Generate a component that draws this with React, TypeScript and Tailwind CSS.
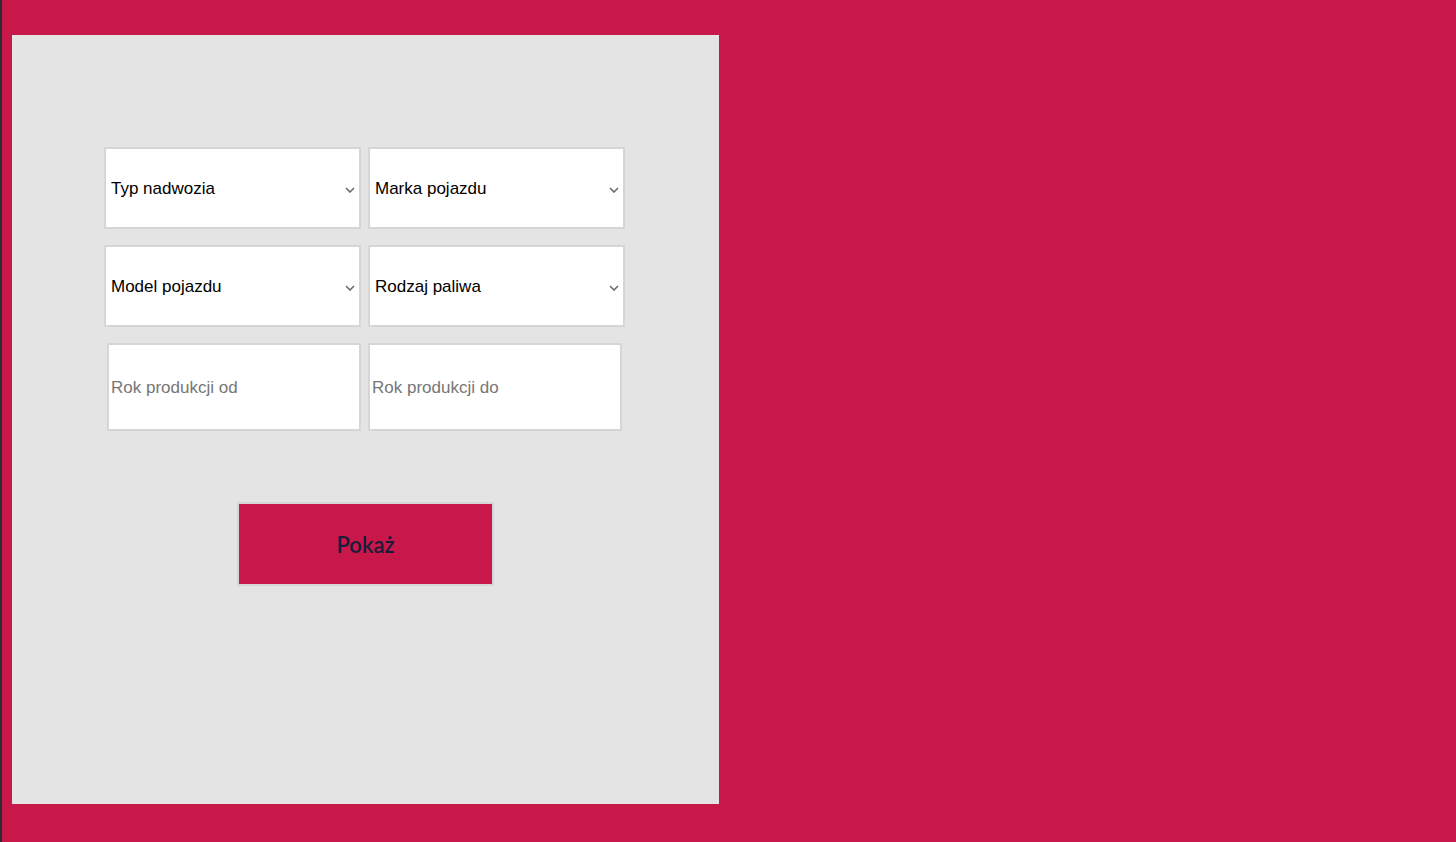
import { useState } from "react";

function Chevron() {
  return (
    <svg width="10" height="6" viewBox="0 0 10 6" className="shrink-0 mt-[1px]">
      <path d="M1 1l4 4 4-4" fill="none" stroke="#6b6b6b" strokeWidth="1.6" />
    </svg>
  );
}

function FakeSelect({ label }: { label: string }) {
  return (
    <div className="h-[82px] bg-white border-2 border-[#d6d6d8] flex items-center justify-between pl-[5px] pr-[4px] pt-[2px] cursor-pointer">
      <span className="text-[17px] text-black">{label}</span>
      <Chevron />
    </div>
  );
}

export default function App() {
  const [from, setFrom] = useState("");
  const [to, setTo] = useState("");

  return (
    <div className="h-screen w-full flex bg-[#c8184a] font-['Liberation_Sans',Arial,sans-serif] overflow-hidden">
      <div className="w-[2px] h-full bg-[#2b2b30]" />
      <div className="ml-[10px] mt-[35px] w-[707px] h-[769px] bg-[#e4e4e4] pt-[112px] pl-[92px]">
        <div className="grid grid-cols-[257px_257px] gap-x-[7px] gap-y-[16px] w-[521px]">
          <FakeSelect label="Typ nadwozia" />
          <FakeSelect label="Marka pojazdu" />
          <FakeSelect label="Model pojazdu" />
          <FakeSelect label="Rodzaj paliwa" />
          <input
            value={from}
            onChange={(e) => setFrom(e.target.value)}
            placeholder="Rok produkcji od"
            className="ml-[3px] w-[254px] h-[88px] bg-white border-2 border-[#d6d6d8] px-[2px] pt-[2px] text-[17px] placeholder:text-[#767676] outline-none"
          />
          <input
            value={to}
            onChange={(e) => setTo(e.target.value)}
            placeholder="Rok produkcji do"
            className="w-[254px] h-[88px] bg-white border-2 border-[#d6d6d8] px-[2px] pt-[2px] text-[17px] placeholder:text-[#767676] outline-none"
          />
        </div>
        <button className="ml-[133px] mt-[71px] w-[257px] h-[84px] bg-[#c8184a] border-2 border-[#d6d6d8] text-[#1a1a3a] text-[22px] font-['Lato',sans-serif] font-semibold">
          Pokaż
        </button>
      </div>
    </div>
  );
}
